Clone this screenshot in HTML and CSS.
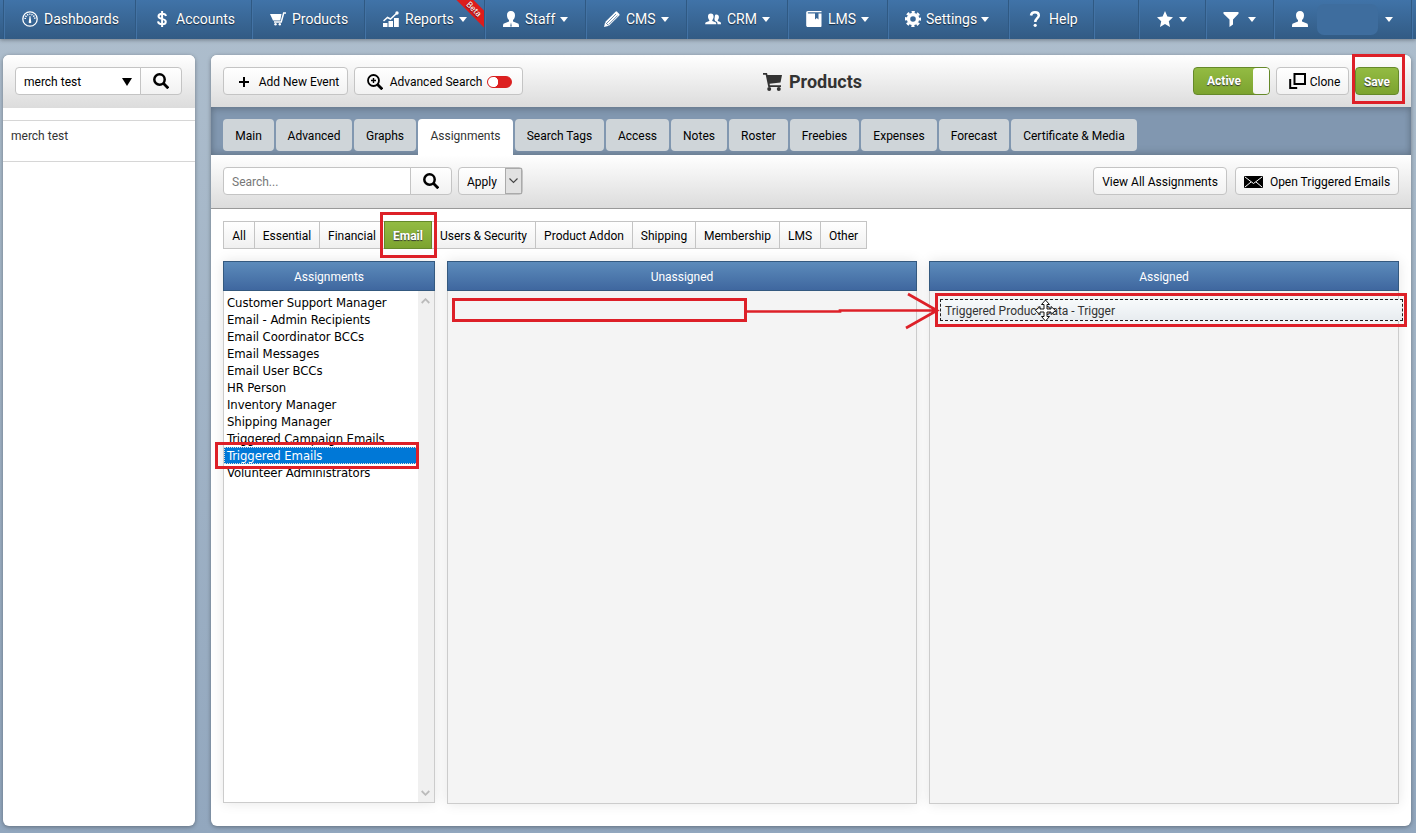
FILE: index.html
```html
<!DOCTYPE html>
<html lang="en">
<head>
    <meta charset="UTF-8">
    <title>Products</title>
    <link rel="stylesheet" href="styles.css">
</head>
<body>
    <nav class="top-nav">
        <a class="nav-item">
            <svg class="icon" viewBox="0 0 16 16"><circle cx="8" cy="8" r="7.2" fill="none" stroke="#fff" stroke-width="1.3"/><path d="M3.2 8a4.8 4.8 0 0 1 9.6 0" fill="none" stroke="#fff" stroke-width="1.6" stroke-dasharray="1.2 1"/><path d="M7.6 5h.8l.8 5.500a1.300 1.300 0 1 1-2.400 0z"/></svg>
            Dashboards
        </a>
        <a class="nav-item">
            <svg class="icon" viewBox="0 0 16 16"><path d="M12 5C11.600 3 10 2.700 8.200 2.700 6 2.700 4.500 3.600 4.500 5.200c0 3.600 7.300 1.800 7.300 5.500 0 1.700-1.500 2.600-3.700 2.600S4.300 12.500 4 10.400M8.100 0v16" fill="none" stroke="#fff" stroke-width="2"/></svg>
            Accounts
        </a>
        <a class="nav-item">
            <svg class="icon" viewBox="0 0 16 16"><path d="M0 3h11.500l-1.200 6.500H3z"/><path d="M16 2h-2.300l-2.500 9H4" fill="none" stroke="#fff" stroke-width="1.500"/><circle cx="5.500" cy="13.300" r="1.200"/><circle cx="9.800" cy="13.300" r="1.200"/></svg>
            Products
        </a>
        <a class="nav-item">
            <svg class="icon" viewBox="0 0 16 16"><path d="M0 12h4.500v4H0zM5.500 10h4.500v6H5.500zM11 7h4.800v9H11z"/><path d="M.5 10l4-3.500 3 1.500L14 2" fill="none" stroke="#fff" stroke-width="1.500"/><circle cx="14" cy="2" r="1.700"/></svg>
            Reports <span class="caret"></span>
            <span class="beta"><span>Beta</span></span>
        </a>
        <a class="nav-item">
            <svg class="icon" viewBox="0 0 16 16"><path d="M8 0c2.600 0 4 1.700 4 4.200 0 2.200-.9 4-2 4.900v1.300l5 2c.8.300 1 1 1 3.600H0c0-2.600.2-3.300 1-3.600l5-2V9.100c-1.100-.9-2-2.700-2-4.900C4 1.700 5.400 0 8 0z"/><path d="M8 11.500l-.8 4h1.600z" fill="#38638f"/></svg>
            Staff <span class="caret"></span>
        </a>
        <a class="nav-item">
            <svg class="icon" viewBox="0 0 16 16"><path d="M0 16l1.200-5L11.500.7q.8-.7 1.600 0l2.200 2.200q.7.800 0 1.600L5 14.800z"/><path d="M3 12L12 3M4.700 13.500l9-9M1.500 11.500l3 3" fill="none" stroke="#38638f" stroke-width=".7"/></svg>
            CMS <span class="caret"></span>
        </a>
        <a class="nav-item">
            <svg class="icon" viewBox="0 0 16 16"><path d="M5.800 2.500C7.700 2.500 8.600 3.800 8.600 5.500S8 8.300 7.300 9v1l3.200 1.200c.6.300.8.800.8 2H.2c0-1.200.2-1.700.8-2L4.300 10V9C3.600 8.300 3 7.200 3 5.500s.9-3 2.800-3zM11.500 3.500c1.600 0 2.400 1.100 2.400 2.600 0 1.300-.5 2.300-1.100 2.900v1l2.400 1c.6.300.8.900.8 2.200h-3.500c0-2-.6-2.500-2.600-3.200V9.200C9.500 8.700 9.300 8 9.600 7c.5-2-.1-3.500 1.900-3.500z"/></svg>
            CRM <span class="caret"></span>
        </a>
        <a class="nav-item">
            <svg class="icon" viewBox="0 0 16 16"><path d="M2 0h13.500v1.200H2.300c-.8 0-.8 1.300 0 1.300H9v6l1.800-1.600 1.700 1.600v-6h3V15c0 .6-.4 1-1 1H2c-1.200 0-1.800-.6-1.800-1.800V1.800C.2.700.8 0 2 0z"/></svg>
            LMS <span class="caret"></span>
        </a>
        <a class="nav-item settings">
            <svg class="icon" viewBox="0 0 16 16"><circle cx="8" cy="8" r="4.500" fill="none" stroke="#fff" stroke-width="3.400"/><circle cx="8" cy="8" r="7" fill="none" stroke="#fff" stroke-width="2.200" stroke-dasharray="3.100 2.398" stroke-dashoffset="1.550"/></svg>
            Settings <span class="caret"></span>
        </a>
        <a class="nav-item">
            <svg class="icon" viewBox="0 0 16 16"><path d="M4 4.500C4.300 2.300 5.800 1.300 8 1.300s3.800 1.200 3.800 3.200c0 2.500-3.500 3-3.500 6.500" fill="none" stroke="#fff" stroke-width="2.500"/><circle cx="8.200" cy="14.300" r="1.600"/></svg>
            Help
        </a>
        <span class="nav-item"></span>
        <a class="nav-item star">
            <svg class="icon" viewBox="0 0 16 16"><path d="M8 0l2.400 5.600 5.600.6-4.200 4 1.200 5.800-5-3-5 3 1.200-5.800L0 6.200l5.600-.6z"/></svg>
            <span class="caret"></span>
        </a>
        <a class="nav-item filter">
            <svg class="icon" viewBox="0 0 16 16"><path d="M.5 1h15v1.700L10 8.500v5L6.500 16V8.500L.5 2.700z"/></svg>
            <span class="caret"></span>
        </a>
        <a class="nav-item user">
            <svg class="icon" viewBox="0 0 16 16"><path d="M8 0c2.600 0 4 1.700 4 4.200 0 2.200-.9 4-2 4.900v1.300l5 2c.8.300 1 1 1 3.600H0c0-2.600.2-3.300 1-3.600l5-2V9.100c-1.100-.9-2-2.700-2-4.900C4 1.700 5.400 0 8 0z"/></svg>
            <span class="user-name"></span>
            <span class="caret"></span>
        </a>
        <span class="nav-item"></span>
    </nav>

    <div class="page">
        <aside class="sidebar">
            <div class="sidebar-head">
                <div class="select">merch test <span class="arrow"></span></div>
                <button class="search-btn"><svg class="icon" viewBox="0 0 16 16"><circle cx="6.500" cy="6.500" r="5.200" fill="none" stroke="#000" stroke-width="2.500"/><path d="M10.300 10.300l5 5" stroke="#000" stroke-width="2.800"/></svg></button>
            </div>
            <div class="sidebar-row">merch test</div>
        </aside>

        <main class="main">
            <header class="main-head">
                <button class="btn add"><svg width="10" height="10" viewBox="0 0 10 10"><path d="M5 0v10M0 5h10" stroke="#000" stroke-width="2"/></svg>Add New Event</button>
                <button class="btn advanced">
                    <svg class="icon" viewBox="0 0 16 16"><circle cx="6.500" cy="6.500" r="5.500" fill="none" stroke="#000" stroke-width="1.800"/><path d="M6.500 4v5M4 6.500h5" stroke="#000" stroke-width="1.400"/><path d="M10.500 10.500l4.800 4.800" stroke="#000" stroke-width="2.800"/></svg>
                    Advanced Search <span class="toggle"></span>
                </button>
                <h1>
                    <svg width="19" height="18" viewBox="0 0 19 18"><path d="M0 0h4l.5 2H19l-1.500 7.500-11 1.200.4 1.600H18v1.700H5.300L2.700 1.800H0z"/><circle cx="6.200" cy="16" r="2"/><circle cx="15.800" cy="16" r="2"/></svg>
                    Products
                </h1>
                <div class="active-switch">Active<span></span></div>
                <button class="btn clone"><svg width="17" height="16" viewBox="0 0 17 16"><path d="M5.500 1H16v10H5.500z" fill="none" stroke="#000" stroke-width="2"/><path d="M1.200 6v9h7" fill="none" stroke="#000" stroke-width="2"/></svg>Clone</button>
                <button class="btn save">Save</button>
            </header>

            <div class="tabs">
                <a>Main</a>
                <a>Advanced</a>
                <a>Graphs</a>
                <a class="current">Assignments</a>
                <a>Search Tags</a>
                <a>Access</a>
                <a>Notes</a>
                <a>Roster</a>
                <a>Freebies</a>
                <a>Expenses</a>
                <a>Forecast</a>
                <a>Certificate &amp; Media</a>
            </div>

            <div class="toolbar">
                <div class="search-box">Search...</div>
                <button class="search-btn"><svg class="icon" viewBox="0 0 16 16"><circle cx="6.500" cy="6.500" r="5.200" fill="none" stroke="#000" stroke-width="2.500"/><path d="M10.300 10.300l5 5" stroke="#000" stroke-width="2.800"/></svg></button>
                <div class="btn apply">Apply<span><svg width="9" height="6" viewBox="0 0 9 6"><path d="M.5.500l4 4 4-4" fill="none" stroke="#444" stroke-width="1.100"/></svg></span></div>
                <button class="btn view-all">View All Assignments</button>
                <button class="btn triggered"><svg width="19" height="12" viewBox="0 0 19 12"><rect width="19" height="12" rx="1"/><path d="M1 1l8.500 6.500L18 1M1 11l6-5M18 11l-6-5" fill="none" stroke="#fff" stroke-width="1"/></svg>Open Triggered Emails</button>
            </div>

            <div class="filters">
                <a>All</a>
                <a>Essential</a>
                <a>Financial</a>
                <a class="current">Email</a>
                <a>Users &amp; Security</a>
                <a>Product Addon</a>
                <a>Shipping</a>
                <a>Membership</a>
                <a>LMS</a>
                <a>Other</a>
            </div>

            <div class="columns">
                <section class="column list">
                    <h2>Assignments</h2>
                    <div class="column-body">
                        <ul>
                            <li>Customer Support Manager</li>
                            <li>Email - Admin Recipients</li>
                            <li>Email Coordinator BCCs</li>
                            <li>Email Messages</li>
                            <li>Email User BCCs</li>
                            <li>HR Person</li>
                            <li>Inventory Manager</li>
                            <li>Shipping Manager</li>
                            <li>Triggered Campaign Emails</li>
                            <li class="selected">Triggered Emails</li>
                            <li>Volunteer Administrators</li>
                        </ul>
                        <div class="scrollbar">
                            <svg width="9" height="6" viewBox="0 0 9 6"><path d="M.7 5l3.800-3.800L8.300 5" fill="none" stroke="#bbb" stroke-width="1.800"/></svg>
                            <svg width="9" height="6" viewBox="0 0 9 6"><path d="M.7 1l3.800 3.800L8.300 1" fill="none" stroke="#bbb" stroke-width="1.800"/></svg>
                        </div>
                    </div>
                </section>
                <section class="column">
                    <h2>Unassigned</h2>
                    <div class="column-body"></div>
                </section>
                <section class="column">
                    <h2>Assigned</h2>
                    <div class="column-body drop"><div class="drag-item">Triggered Product Data - Trigger</div></div>
                </section>
            </div>
        </main>
    </div>

    <!-- highlight boxes, arrow and move cursor -->
    <svg class="notes" width="1416" height="833" viewBox="0 0 1416 833">
        <g fill="none" stroke="#dd2028" stroke-width="3">
            <rect x="1353.500" y="55.500" width="50" height="47"/>
            <rect x="381.500" y="213.500" width="54" height="43"/>
            <rect x="216.500" y="443.500" width="201" height="24"/>
            <rect x="453.500" y="299.500" width="292" height="21"/>
            <rect x="936.500" y="294.500" width="469" height="31"/>
            <path d="M747 311.500h93v-1h97M908 294l29 16.500L906 328" stroke-width="2.700"/>
        </g>
        <path d="M1045.500 300l4 4.500h-2.500v4.500h4V306.500l4.500 4-4.500 4v-2.500h-4v4.500h2.500l-4 4.500-4-4.500h2.500v-4.500h-4v2.500l-4.500-4 4.500-4v2.500h4v-4.500h-2.500z" fill="#fff" stroke="#111" stroke-width="1"/>
    </svg>
</body>
</html>
```
FILE: styles.css
```css
* {
    box-sizing: border-box;
}
body {
    margin: 0;
    height: 833px;
    overflow: hidden;
    font-family: Roboto, "Liberation Sans", sans-serif;
    font-size: 12px;
    color: #000;
    background: linear-gradient(#aebecd, #92a7be);
}
button {
    font: inherit;
    color: inherit;
}
.icon {
    width: 16px;
    height: 16px;
    flex: none;
}

/* top navigation */
.top-nav {
    display: grid;
    grid-template-columns: 132px 116px 113px 120px 101px 101px 101px 100px 121px 85px 45px 67px 68px 138px 1fr;
    height: 39px;
    padding-left: 4px;
    background: linear-gradient(#4073a8, #325b84);
    box-shadow: 0 1px 4px rgba(0,0,0,0.35);
}
.nav-item {
    display: flex;
    align-items: center;
    gap: 6px;
    padding: 0 0 1px 17px;
    position: relative;
    border-left: 1px solid #4373a5;
    box-shadow: -1px 0 #2f5983;
    color: #fff;
    font-size: 14px;
    white-space: nowrap;
    text-shadow: 0 1px 1px rgba(0,0,0,0.6);
}
.nav-item .icon {
    fill: #fff;
}
.nav-item.settings {
    padding-left: 16px;
    gap: 5px;
}
.caret {
    margin-left: -1px;
    border: 4px solid transparent;
    border-top: 5px solid #fff;
    border-bottom: 0;
}
.star .caret {
    margin-left: 0;
}
.filter, .user {
    padding-left: 16px;
}
.filter .caret {
    margin-left: 3px;
}
.user .icon {
    margin-left: 1px;
}
.user .caret {
    margin-left: 1px;
}
.user-name {
    width: 61px;
    height: 31px;
    margin-left: 3px;
    border-radius: 7px;
    background: #3e6d9e;
}
.beta {
    position: absolute;
    top: 0;
    right: 0;
    width: 30px;
    height: 28px;
    overflow: hidden;
}
.beta span {
    position: absolute;
    top: 3px;
    left: -9px;
    width: 56px;
    background: #dd1c1c;
    font-size: 8.5px;
    line-height: 12px;
    text-align: center;
    transform: rotate(45deg);
}

.page {
    display: flex;
    gap: 16px;
    padding: 16px 5px 0 3px;
}
.sidebar, .main {
    height: 771px;
    background: #fff;
    border-radius: 6px;
    box-shadow: 0 1px 4px rgba(0,0,0,0.35);
}

/* sidebar */
.sidebar {
    width: 192px;
}
.sidebar-head {
    display: flex;
    height: 53px;
    padding: 12px 12px 0;
    border-radius: 6px 6px 0 0;
    background: linear-gradient(#fff, #dcdcdc);
}
.select {
    display: flex;
    justify-content: space-between;
    align-items: center;
    width: 126px;
    height: 28px;
    padding: 1px 8px 0;
    border: 1px solid #c4c4c4;
    border-radius: 4px 0 0 4px;
    background: #fff;
}
.arrow {
    border: 5px solid transparent;
    border-top: 8px solid #000;
    border-bottom: 0;
}
.search-btn {
    display: flex;
    align-items: center;
    justify-content: center;
    width: 42px;
    height: 28px;
    margin-left: -1px;
    padding: 0;
    border: 1px solid #c4c4c4;
    border-radius: 0 4px 4px 0;
    background: linear-gradient(#fff, #f2f2f2);
}
.sidebar-row {
    height: 42px;
    margin-top: 12px;
    padding: 8px;
    border: 1px solid #d6d6d6;
    border-width: 1px 0;
    color: #333;
    line-height: 14px;
}

/* main panel */
.main {
    width: 1200px;
}
.main-head {
    display: flex;
    height: 52px;
    padding: 12px 12px 0;
    border-radius: 6px 6px 0 0;
    background: linear-gradient(#fff, #dcdcdc);
}
.btn {
    display: flex;
    align-items: center;
    justify-content: center;
    height: 28px;
    padding: 1px 0 0;
    border: 1px solid #c4c4c4;
    border-radius: 4px;
    background: linear-gradient(#fff, #f2f2f2);
    white-space: nowrap;
}
.add {
    width: 125px;
    padding-left: 7px;
    gap: 10px;
}
.advanced {
    width: 169px;
    margin-left: 6px;
    padding-left: 2px;
    gap: 7px;
}
.toggle {
    width: 25px;
    height: 12px;
    margin-left: -2px;
    border-radius: 6px;
    border: 1px solid #d81f1f;
    background: radial-gradient(circle at 5px 5px, #fff 5px, #dd2020 5.5px);
}
.main-head h1 {
    display: flex;
    align-items: center;
    gap: 7px;
    width: 430px;
    height: 29px;
    margin: 0 0 0 240px;
    color: #333;
    font-size: 18px;
    font-weight: 700;
    fill: #333;
}
.active-switch, .save, .filters .current {
    background: linear-gradient(#93bb43, #7ca32f);
    border: 1px solid #65892a;
    color: #fff;
    font-weight: 700;
    text-shadow: 0 1px 1px #333;
}
.active-switch {
    display: flex;
    align-items: center;
    justify-content: space-between;
    width: 77px;
    height: 28px;
    padding-left: 13px;
    border-radius: 4px;
    line-height: 28px;
}
.active-switch span {
    width: 16px;
    height: 26px;
    border-radius: 3px;
    background: linear-gradient(#fff, #f4f4f4);
}
.clone {
    width: 73px;
    margin-left: 6px;
    gap: 4px;
    padding-left: 4px;
}
.clone svg {
    margin-top: -2px;
}
.save {
    width: 44px;
    margin-left: 6px;
}

.tabs {
    display: grid;
    grid-template-columns: 51px 76px 62px 95px 89px 63px 56px 59px 69px 76px 70px 126px;
    gap: 2px;
    height: 48px;
    padding: 12px 12px 0;
    background: #8197b0;
    box-shadow: inset 0 2px 7px rgba(0,0,0,0.22), inset 0 -4px 6px rgba(0,0,0,0.1);
}
.tabs a {
    height: 32px;
    border-radius: 4px;
    background: #cfd5d9;
    line-height: 34px;
    text-align: center;
    white-space: nowrap;
}
.tabs .current {
    height: 36px;
    border-radius: 4px 4px 0 0;
    background: #fff;
    color: #333;
}

.toolbar {
    display: flex;
    height: 54px;
    padding: 12px 12px 0;
    border-bottom: 1px solid #999;
    background: linear-gradient(#fff, #dcdcdc);
}
.search-box {
    width: 188px;
    height: 28px;
    padding-left: 8px;
    border: 1px solid #c4c4c4;
    border-radius: 4px 0 0 4px;
    background: #fff;
    color: #777;
    line-height: 28px;
}
.apply {
    width: 65px;
    margin-left: 6px;
    padding-left: 8px;
    justify-content: space-between;
}
.apply span {
    display: flex;
    align-items: center;
    justify-content: center;
    width: 17px;
    height: 26px;
    margin-top: -1px;
    border: 1px solid #aaa;
    background: #e1e1e1;
}
.view-all {
    width: 134px;
    margin-left: auto;
}
.triggered {
    width: 164px;
    margin-left: 8px;
    gap: 7px;
}

.filters {
    display: grid;
    grid-template-columns: 31px 65px 65px 48px 103px 97px 63px 84px 41px 47px;
    height: 28px;
    margin: 12px 12px 0;
}
.filters a {
    height: 28px;
    border: 1px solid #c4c4c4;
    border-right: 0;
    background: linear-gradient(#fff, #f0f0f0);
    line-height: 28px;
    text-align: center;
    white-space: nowrap;
}
.filters a:last-child {
    border-right: 1px solid #c4c4c4;
}
.filters .current + a {
    border-left: 0;
}
.filters .current {
    background: linear-gradient(#93bb43, #7ca32f);
    border: 1px solid #65892a;
}

/* assignment columns */
.columns {
    display: grid;
    grid-template-columns: 212px 470px 470px;
    gap: 12px;
    margin: 12px 12px 0;
}
.column {
    height: 543px;
    box-shadow: 0 0 12px rgba(0,0,0,0.1);
}
.column.list {
    height: 542px;
}
.column h2 {
    height: 30px;
    margin: 0;
    border: 1px solid #34597f;
    background: linear-gradient(#5c8bbb, #3f679f);
    color: #fff;
    font-size: 12px;
    font-weight: 400;
    line-height: 30px;
    text-align: center;
}
.column-body {
    height: calc(100% - 30px);
    border: 1px solid #ccc;
    border-top: 0;
    background: #f4f4f4;
}
.list .column-body {
    display: flex;
    background: #fff;
}
.list ul {
    flex: 1;
    margin: 0;
    padding: 3px 0 0;
    list-style: none;
    font-family: "DejaVu Sans Condensed", "DejaVu Sans", sans-serif;
    font-size: 13px;
    letter-spacing: -0.09px;
}
.list li {
    height: 17px;
    padding-left: 3px;
    line-height: 17px;
    white-space: nowrap;
}
.list .selected {
    background: #0078d7;
    color: #fff;
    outline: 1px dotted #ddd;
    outline-offset: -1px;
}
.scrollbar {
    display: flex;
    flex-direction: column;
    justify-content: space-between;
    align-items: center;
    width: 16px;
    padding: 7px 2px 6px 0;
    background: #f0f0f0;
}
.drop {
    padding: 8px 0 0 10px;
}
.drag-item {
    width: 463px;
    height: 22px;
    padding-left: 4px;
    border: 1px dashed #222;
    background: linear-gradient(#f7fafb, #e8ecf0);
    color: #333;
    line-height: 22px;
}

.notes {
    position: absolute;
    top: 0;
    left: 0;
}
```
